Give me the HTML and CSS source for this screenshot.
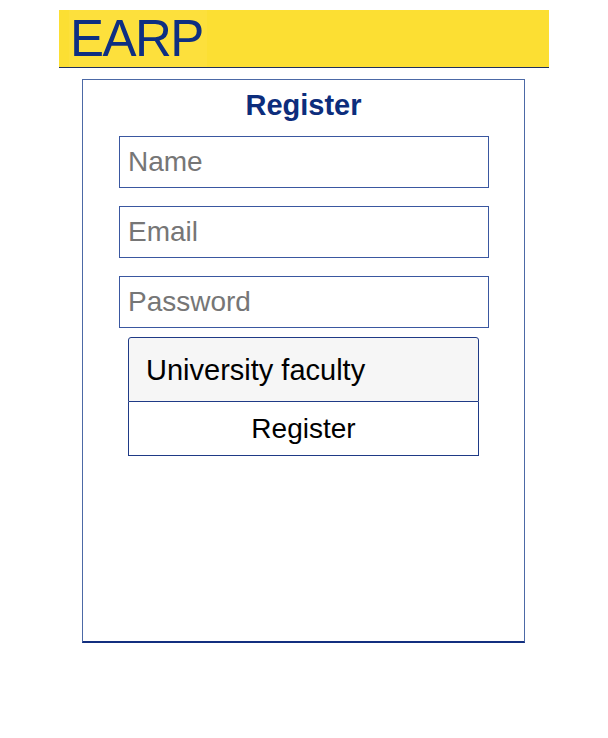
FILE: index.html
```html
<!DOCTYPE html>
<html lang="en">
<head>
<meta charset="utf-8">
<title>EARP - Register</title>
<link rel="stylesheet" href="styles.css">
</head>
<body>
<div class="page">
  <header class="topbar">
    <span class="logo">EARP</span>
  </header>
  <main class="card">
    <h1 class="title">Register</h1>
    <form class="form">
      <input class="field" type="text" placeholder="Name">
      <input class="field" type="email" placeholder="Email">
      <input class="field" type="password" placeholder="Password">
      <div class="actions">
        <select class="role">
          <option>University faculty</option>
        </select>
        <button class="submit" type="button">Register</button>
      </div>
    </form>
  </main>
</div>
</body>
</html>
```
FILE: styles.css
```css
* { box-sizing: border-box; }
html, body { margin: 0; padding: 0; background: #fff; }
body { font-family: "Liberation Sans", Arial, sans-serif; }

.page {
  width: 490px;
  margin: 0 auto;
  padding-top: 10px;
}

.topbar {
  height: 58px;
  background: #fcdf33;
  border-bottom: 1px solid #1f2f5e;
  padding-left: 10px;
}

.logo {
  display: inline-block;
  font-size: 51px;
  line-height: 57px;
  letter-spacing: -1.5px;
  color: #0e2f82;
  padding: 0 4px 0 1px;
  background: #fde03c;
}

.card {
  width: 443px;
  height: 564px;
  margin: 11px 0 0 23px;
  border: 1px solid #4c69a6;
  border-bottom: 2px solid #132f7f;
  padding-top: 9px;
}

.title {
  margin: 0;
  text-align: center;
  font-size: 29px;
  line-height: 32px;
  font-weight: bold;
  color: #0c2d7c;
}

.form {
  display: flex;
  flex-direction: column;
  align-items: center;
  margin-top: 15px;
  margin-left: 1px;
}

.field {
  width: 370px;
  height: 52px;
  margin: 0 0 18px;
  border: 1px solid #3a57a0;
  border-radius: 0;
  padding: 0 8px;
  font-family: "Liberation Sans", Arial, sans-serif;
  font-size: 28px;
  color: #222;
  background: #fff;
  outline: none;
}
.field:last-of-type { margin-bottom: 9px; }
.field::placeholder { color: #767676; }

.actions {
  width: 351px;
  display: flex;
  flex-direction: column;
  margin-left: -1px;
}

.role {
  appearance: none;
  -webkit-appearance: none;
  height: 65px;
  border: 1px solid #1f3a86;
  border-radius: 3px 3px 0 0;
  background: #f6f6f6;
  padding: 0 0 0 17px;
  font-family: "Liberation Sans", Arial, sans-serif;
  font-size: 29px;
  color: #000;
  outline: none;
}

.submit {
  height: 54px;
  border: 1px solid #1f3a86;
  border-top: none;
  border-radius: 0;
  background: #fff;
  font-family: "Liberation Sans", Arial, sans-serif;
  font-size: 28px;
  color: #000;
  padding: 0;
}
```
